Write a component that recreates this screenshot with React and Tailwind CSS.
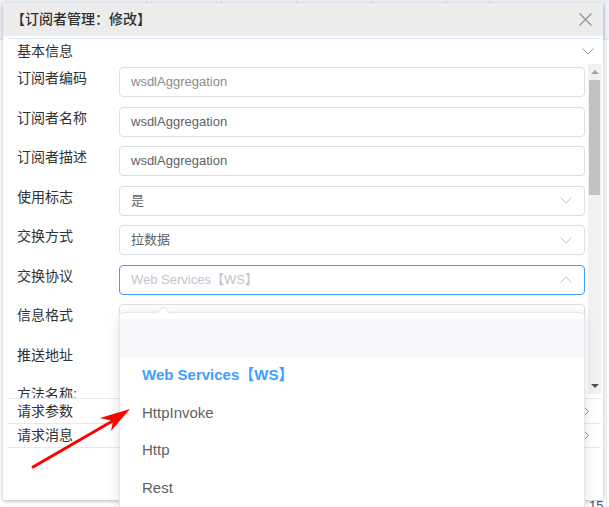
import React from "react";

const rows = [
  { label: "订阅者编码", value: "wsdlAggregation", muted: true },
  { label: "订阅者名称", value: "wsdlAggregation" },
  { label: "订阅者描述", value: "wsdlAggregation" },
  { label: "使用标志", value: "是", select: true },
  { label: "交换方式", value: "拉数据", select: true },
  { label: "交换协议", value: "Web Services【WS】", select: true, open: true },
  { label: "信息格式", value: "", select: true },
  { label: "推送地址", value: "" },
  { label: "方法名称:", value: "" },
];

const options = ["", "Web Services【WS】", "HttpInvoke", "Http", "Rest"];

const Chevron = ({ up, className }) => (
  <svg width="12" height="7" viewBox="0 0 12 7" className={className}>
    <path
      d={up ? "M0.5 6.5 L6 1 L11.5 6.5" : "M0.5 0.5 L6 6 L11.5 0.5"}
      fill="none"
      stroke="currentColor"
      strokeWidth="1"
    />
  </svg>
);

const ChevronRight = () => (
  <svg width="5" height="9" viewBox="0 0 5 9" className="text-[#909399]">
    <path d="M0.5 0.5 L4.5 4.5 L0.5 8.5" fill="none" stroke="currentColor" strokeWidth="1" />
  </svg>
);

const FormRow = ({ row }) => (
  <div className="flex items-start h-[30px] shrink-0">
    <div className="w-[102px] leading-[22px] text-[14px] text-[#303133] whitespace-nowrap">{row.label}</div>
    <div
      className={`w-[466px] h-[30px] rounded-[4px] border bg-white flex items-center justify-between pl-[11px] pr-[12px] text-[13px] ${
        row.open ? "border-[#409eff]" : "border-[#dcdfe6]"
      }`}
    >
      <span className={row.open ? "text-[#c0c4cc]" : row.muted ? "text-[#8c8c8c]" : "text-[#606266]"}>
        {row.value}
      </span>
      {row.select && <Chevron up={row.open} className="text-[#c0c4cc]" />}
    </div>
  </div>
);

const Scrollbar = () => (
  <div className="w-[13px] h-[330px] bg-[#f1f1f1] flex flex-col">
    <div className="h-[16px] flex items-center justify-center">
      <div className="w-0 h-0 border-x-[4px] border-x-transparent border-b-[4px] border-b-[#a3a3a3]" />
    </div>
    <div className="h-[115px] mx-[1px] bg-[#c1c1c1]" />
    <div className="flex-1" />
    <div className="h-[16px] flex items-center justify-center">
      <div className="w-0 h-0 border-x-[4px] border-x-transparent border-t-[4px] border-t-[#505050]" />
    </div>
  </div>
);

export default function App() {
  return (
    <div
      className="relative w-[609px] h-[507px] overflow-hidden bg-white"
      style={{ fontFamily: '"Liberation Sans", "Noto Sans CJK SC", sans-serif' }}
    >
      {/* page behind the dialog */}
      <div className="h-[40px] bg-[#eef2f8] flex border-b border-[#dfe6ee]">
        <div className="w-[147px] border-r border-[#d8e0ea]" />
        <div className="w-[75px] border-r border-[#d8e0ea]" />
        <div className="w-[75px] border-r border-[#d8e0ea]" />
        <div className="w-[75px] border-r border-[#d8e0ea]" />
        <div className="w-[75px] border-r border-[#d8e0ea]" />
        <div className="w-[43px] border-r border-[#d8e0ea]" />
        <div className="w-[115px] border-r border-[#d8e0ea]" />
      </div>
      <div className="absolute right-[2px] top-[40px] bottom-0 w-px bg-[#e8ecf2]" />
      <div className="absolute left-[589px] top-[496px] text-[13px] text-[#3b5b8a]">15</div>

      {/* dialog */}
      <div className="absolute left-[3px] top-[3px] w-[600px] h-[497px] bg-white rounded-[2px] shadow-[0_1px_4px_rgba(0,0,0,0.3)] flex flex-col">
        <div className="h-[33px] bg-[#ececec] flex items-center justify-between pl-[8px] pr-[11px] shrink-0">
          <span className="text-[14px] text-[#303133] font-medium">【订阅者管理：修改】</span>
          <svg width="13" height="13" viewBox="0 0 13 13" className="text-[#909399]">
            <path d="M0.5 0.5 L12.5 12.5 M12.5 0.5 L0.5 12.5" stroke="currentColor" strokeWidth="1.2" />
          </svg>
        </div>

        <div className="pl-[5px] pr-[2px] pt-[2px]">
          <div className="border-t border-[#d6e4f3]">
            <div className="h-[25px] flex items-center justify-between pl-[9px] pr-[7px]">
              <span className="text-[14px] text-[#303133]">基本信息</span>
              <Chevron className="text-[#909399]" />
            </div>
            <div className="flex h-[334px] overflow-hidden">
              <div className="flex-1 overflow-hidden pl-[9px] pt-[3px] flex flex-col gap-[9.5px]">
                {rows.map((row) => (
                  <FormRow key={row.label} row={row} />
                ))}
              </div>
              <Scrollbar />
            </div>
          </div>
          {["请求参数", "请求消息"].map((t) => (
            <div
              key={t}
              className="h-[25px] border-t border-[#e4e9f2] last:border-b flex items-center justify-between pl-[9px] pr-[12px]"
            >
              <span className="text-[14px] text-[#303133]">{t}</span>
              <ChevronRight />
            </div>
          ))}
        </div>
      </div>

      {/* select dropdown */}
      <div className="absolute left-[119px] top-[312px] w-[466px] bg-white border border-[#e4e7ed] rounded-[4px] shadow-[0_2px_12px_rgba(0,0,0,0.12)] py-[6px]">
        <div className="absolute -top-[5px] left-[39px] w-[9px] h-[9px] bg-white border-l border-t border-[#e4e7ed] rotate-45" />
        {options.map((o, i) => (
          <div
            key={i}
            className={`h-[37.5px] flex items-center pl-[22px] text-[15px] ${
              i === 0 ? "bg-[#f5f7fa]" : i === 1 ? "text-[#409eff] font-bold" : "text-[#606266]"
            }`}
          >
            {o}
          </div>
        ))}
      </div>

      {/* annotation arrow */}
      <svg className="absolute inset-0 pointer-events-none" width="609" height="507">
        <line x1="33" y1="467" x2="116" y2="419" stroke="#ff0000" strokeWidth="3" strokeLinecap="round" />
        <polygon points="130,409 100,418 113,421 111,431" fill="#ff0000" />
      </svg>
    </div>
  );
}
